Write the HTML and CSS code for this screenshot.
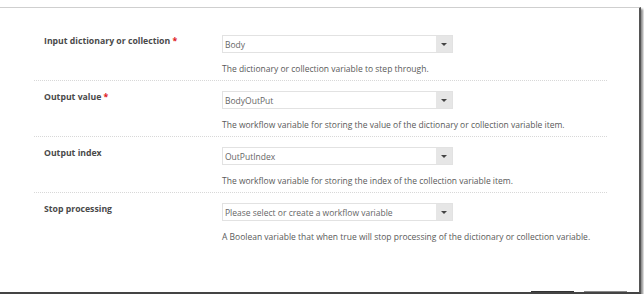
FILE: index.html
```html
<!DOCTYPE html>
<html lang="en">
<head>
  <meta charset="UTF-8">
  <title>For each - configure</title>
  <link rel="stylesheet" href="styles.css">
</head>
<body>

<div class="frame">
  <div class="form">
    <div class="row">
      <div class="label">Input dictionary or collection <span class="req">*</span></div>
      <div class="field">
        <div class="select"><span class="value">Body</span><span class="arrow"></span></div>
        <div class="help">The dictionary or collection variable to step through.</div>
      </div>
    </div>
    <div class="row">
      <div class="label">Output value <span class="req">*</span></div>
      <div class="field">
        <div class="select"><span class="value">BodyOutPut</span><span class="arrow"></span></div>
        <div class="help">The workflow variable for storing the value of the dictionary or collection variable item.</div>
      </div>
    </div>
    <div class="row">
      <div class="label">Output index</div>
      <div class="field">
        <div class="select"><span class="value">OutPutIndex</span><span class="arrow"></span></div>
        <div class="help">The workflow variable for storing the index of the collection variable item.</div>
      </div>
    </div>
    <div class="row last">
      <div class="label">Stop processing</div>
      <div class="field">
        <div class="select"><span class="value">Please select or create a workflow variable</span><span class="arrow"></span></div>
        <div class="help">A Boolean variable that when true will stop processing of the dictionary or collection variable.</div>
      </div>
    </div>
  </div>
  <div class="footer">
    <span class="btn dark"></span>
    <span class="btn light"></span>
  </div>
</div>

</body>
</html>
```

FILE: styles.css
```css
body {
  margin: 0;
  padding: 0;
  background-color: #fff;
  font-family: "Open Sans", "DejaVu Sans", sans-serif;
  font-size: 8.5px;
}

.frame {
  margin-top: 7px;
  width: 639px;
  height: 284px;
  border-top: 1px solid #cfcfcf;
  border-right: 2px solid #555;
  border-bottom: 2px solid #444;
  box-shadow: 2px 2px 2px rgba(0, 0, 0, 0.45);
  display: flex;
  flex-direction: column;
  box-sizing: content-box;
}

.form {
  margin: 17px 0 0 34px;
  width: 573px;
  flex: 1;
}

.row {
  display: flex;
  padding: 10px 0 6px 10px;
  border-bottom: 1px dotted #d8d8d8;
}

.row.last {
  border-bottom: none;
}

.label {
  width: 178px;
  font-weight: bold;
  font-size: 8.7px;
  color: #4a4a4a;
  line-height: 12px;
}

.req {
  color: #e0201c;
}

.select {
  width: 229px;
  height: 16px;
  border: 1px solid #e2e2e2;
  display: flex;
  align-items: center;
  justify-content: space-between;
}

.value {
  padding-left: 2px;
  color: #666;
}

.arrow {
  width: 16px;
  height: 16px;
  background-color: #e6e6e6;
  position: relative;
}

.arrow::after {
  content: "";
  position: absolute;
  left: 5px;
  top: 7px;
  border-left: 3px solid transparent;
  border-right: 3px solid transparent;
  border-top: 3px solid #444;
}

.help {
  margin-top: 11px;
  color: #5a5a5a;
  line-height: 10px;
}

.footer {
  display: flex;
  justify-content: flex-end;
  gap: 10px;
  padding-right: 12px;
}

.btn {
  width: 43px;
  height: 1px;
}

.btn.dark {
  background-color: #333;
}

.btn.light {
  background-color: #888;
}
```
